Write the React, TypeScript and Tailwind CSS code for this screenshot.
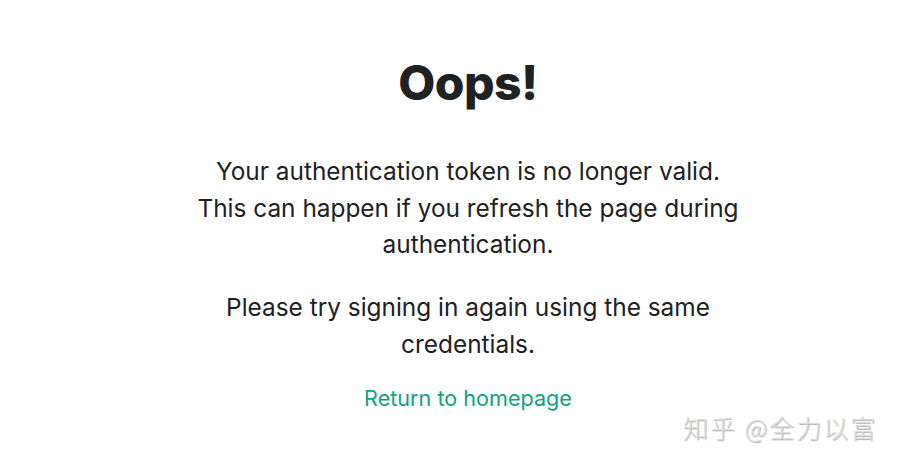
export default function App() {
  return (
    <div className="relative w-[898px] h-[465px] bg-white overflow-hidden" style={{ fontFamily: 'Inter, "Noto Sans", sans-serif' }}>
      <div className="flex flex-col items-center pt-[53px] pl-[38px] text-[#202123]">
        <h1 className="text-[48px] leading-[60px] font-extrabold tracking-[-0.5px]">Oops!</h1>
        <p className="mt-[40px] text-[24.4px] leading-[36.5px] text-center whitespace-nowrap">
          Your authentication token is no longer valid.
          <br />
          This can happen if you refresh the page during
          <br />
          authentication.
        </p>
        <p className="mt-[26px] text-[24.4px] leading-[37px] text-center whitespace-nowrap">
          Please try signing in again using the same
          <br />
          credentials.
        </p>
        <a href="#" className="mt-[20px] text-[21.6px] leading-[30px] text-[#10a37f]">
          Return to homepage
        </a>
      </div>
      <div
        className="absolute left-[683px] top-[410px] text-[25px] leading-[34px] font-light text-[#dcdcdc] tracking-[2px]"
        style={{ fontFamily: '"Noto Sans CJK SC", sans-serif', textShadow: '1px 1px 1px #b0b0b0' }}
      >
        知乎 @全力以富
      </div>
    </div>
  );
}
